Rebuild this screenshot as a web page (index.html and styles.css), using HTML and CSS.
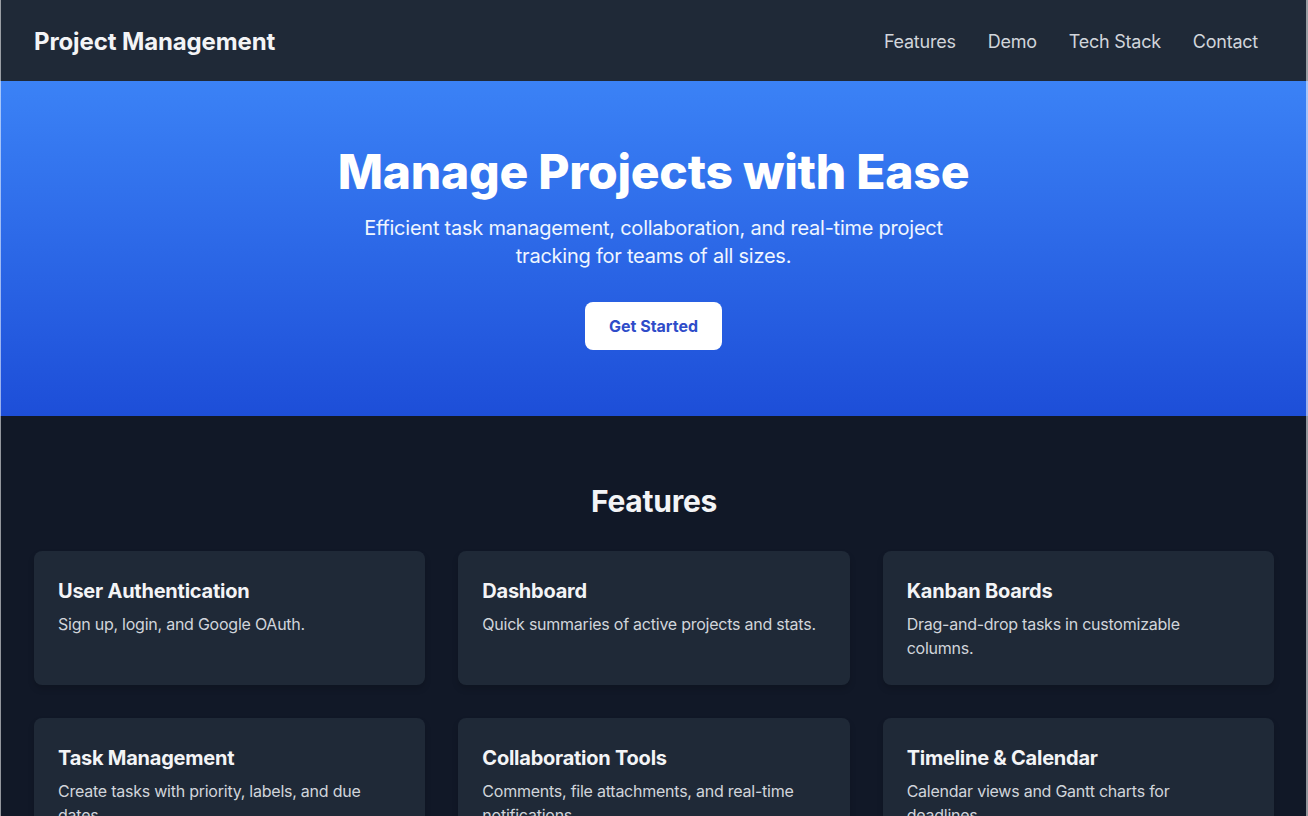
FILE: index.html
```html
<!DOCTYPE html>
<html lang="en">
<head>
<meta charset="utf-8">
<title>Project Management</title>
<link rel="stylesheet" href="styles.css">
</head>
<body>
<header class="site-header edge">
  <div class="logo">Project Management</div>
  <nav class="nav">
    <a href="#features">Features</a>
    <a href="#demo">Demo</a>
    <a href="#tech">Tech Stack</a>
    <a href="#contact">Contact</a>
  </nav>
</header>
<section class="hero edge">
  <h1 class="hero-title">Manage Projects with Ease</h1>
  <p class="hero-text">Efficient task management, collaboration, and real-time project tracking for teams of all sizes.</p>
  <a class="btn" href="#">Get Started</a>
</section>
<section class="features edge" id="features">
  <h2 class="section-title">Features</h2>
  <div class="grid">
    <div class="card"><h3>User Authentication</h3><p>Sign up, login, and Google OAuth.</p></div>
    <div class="card"><h3>Dashboard</h3><p>Quick summaries of active projects and stats.</p></div>
    <div class="card"><h3>Kanban Boards</h3><p>Drag-and-drop tasks in customizable columns.</p></div>
    <div class="card"><h3>Task Management</h3><p>Create tasks with priority, labels, and due dates.</p></div>
    <div class="card"><h3>Collaboration Tools</h3><p>Comments, file attachments, and real-time notifications.</p></div>
    <div class="card"><h3>Timeline &amp; Calendar</h3><p>Calendar views and Gantt charts for deadlines.</p></div>
  </div>
</section>
</body>
</html>
```
FILE: styles.css
```css
* { box-sizing: border-box; }
html, body { margin: 0; padding: 0; }
body {
  font-family: Inter, "Noto Sans", sans-serif;
  background: #111827;
  color: #f3f4f6;
  letter-spacing: -0.015em;
}
.edge {
  border-left: 1px solid rgba(255,255,255,0.55);
  border-right: 2px solid rgba(255,255,255,0.55);
}
.site-header {
  height: 81px;
  background: #1f2937;
  display: flex;
  align-items: center;
  justify-content: space-between;
  padding: 1px 48px 0 33px;
}
.logo {
  font-size: 24px;
  font-weight: 700;
  color: #f3f4f6;
  letter-spacing: -0.005em;
}
.nav { display: flex; gap: 32px; }
.nav a {
  color: #d1d5db;
  text-decoration: none;
  font-size: 18px;
}
.hero {
  height: 335px;
  background: linear-gradient(to bottom, #3b82f6, #1d4ed8);
  display: flex;
  flex-direction: column;
  align-items: center;
  padding-top: 67px;
  text-align: center;
}
.hero-title {
  margin: 0;
  font-size: 48px;
  line-height: 1;
  font-weight: 800;
  color: #fff;
  letter-spacing: -0.005em;
}
.hero-text {
  margin: 18px 0 0;
  max-width: 600px;
  font-size: 20px;
  line-height: 28px;
  color: #eff6ff;
}
.btn {
  margin-top: 32px;
  display: inline-block;
  background: #fff;
  color: #2f4cc9;
  font-weight: 700;
  font-size: 16px;
  line-height: 24px;
  padding: 12px 24px;
  border-radius: 8px;
  text-decoration: none;
  letter-spacing: 0;
}
.features {
  padding: 67px 32px 0 33px;
  min-height: 400px;
}
.section-title {
  margin: 0 0 32px;
  text-align: center;
  font-size: 30px;
  line-height: 36px;
  font-weight: 700;
  color: #f3f4f6;
}
.grid {
  display: grid;
  grid-template-columns: repeat(3, 1fr);
  gap: 33px 33px;
}
.card {
  background: #1f2937;
  border-radius: 8px;
  padding: 26px 26px 24px 24px;
  min-height: 134px;
  box-shadow: 0 4px 6px rgba(0,0,0,0.15);
}
.card h3 {
  margin: 0 0 7px;
  font-size: 20px;
  line-height: 28px;
  font-weight: 700;
  color: #f3f4f6;
}
.card p {
  margin: 0;
  font-size: 16px;
  line-height: 24px;
  color: #d1d5db;
}
```
